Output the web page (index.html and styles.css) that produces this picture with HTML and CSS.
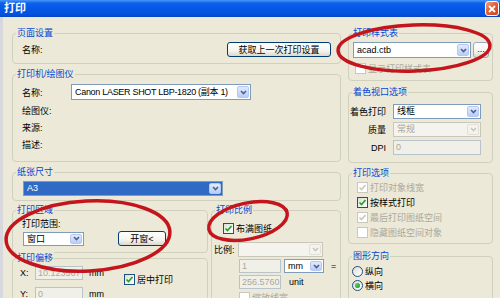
FILE: index.html
```html
<!DOCTYPE html>
<html lang="zh-CN">
<head>
<meta charset="utf-8">
<title>打印</title>
<link rel="stylesheet" href="styles.css">
</head>
<body>
<div class="window">
  <div class="titlebar">
    <span class="title">打印</span>
    <span class="close"><svg width="8" height="8" viewBox="0 0 8 8"><path d="M1 1L7 7M7 1L1 7" stroke="#fff" stroke-width="1.8"/></svg></span>
  </div>
  <div class="content">
    <div class="left">
      <div class="group g-page">
        <span class="legend">页面设置</span>
        <div class="page-row">
          <span>名称:</span>
          <span class="btn btn-last">获取上一次打印设置</span>
        </div>
      </div>
      <div class="group g-printer">
        <span class="legend">打印机/绘图仪</span>
        <div class="printer-row">
          <span class="plabel">名称:</span>
          <span class="combo combo-printer"><span class="val">Canon LASER SHOT LBP-1820 (副本 1)</span><span class="arrow"><svg width="7" height="5" viewBox="0 0 7 5"><path d="M1 1L3.5 3.5L6 1" fill="none" stroke="#4D6185" stroke-width="1.6"/></svg></span></span>
        </div>
        <div class="info-row first">绘图仪:</div>
        <div class="info-row">来源:</div>
        <div class="info-row">描述:</div>
      </div>
      <div class="group g-paper">
        <span class="legend">纸张尺寸</span>
        <span class="combo combo-paper selected"><span class="val">A3</span><span class="arrow"><svg width="7" height="5" viewBox="0 0 7 5"><path d="M1 1L3.5 3.5L6 1" fill="none" stroke="#4D6185" stroke-width="1.6"/></svg></span></span>
      </div>
      <div class="split">
        <div class="subcol">
          <div class="group g-area">
            <span class="legend">打印区域</span>
            <div class="area-label">打印范围:</div>
            <div class="area-row">
              <span class="combo combo-window"><span class="val">窗口</span><span class="arrow"><svg width="7" height="5" viewBox="0 0 7 5"><path d="M1 1L3.5 3.5L6 1" fill="none" stroke="#4D6185" stroke-width="1.6"/></svg></span></span>
              <span class="btn btn-window">开窗&lt;</span>
            </div>
          </div>
          <div class="group g-offset">
            <span class="legend">打印偏移</span>
            <div class="offset-body">
              <div class="offset-fields">
                <div class="offset-row"><span class="olabel">X:</span><span class="field disabled">10.123567</span><span class="unit-mm">mm</span></div>
                <div class="offset-row"><span class="olabel">Y:</span><span class="field disabled">0</span><span class="unit-mm">mm</span></div>
              </div>
              <div class="check-item center-check"><span class="cb"><svg width="9" height="9" viewBox="0 0 9 9"><path d="M1.5 4.5L3.5 6.5L7.5 2" fill="none" stroke="#21A121" stroke-width="1.6"/></svg></span>居中打印</div>
            </div>
          </div>
        </div>
        <div class="group g-scale">
          <span class="legend">打印比例</span>
          <div class="check-item scale-check"><span class="cb"><svg width="9" height="9" viewBox="0 0 9 9"><path d="M1.5 4.5L3.5 6.5L7.5 2" fill="none" stroke="#21A121" stroke-width="1.6"/></svg></span>布满图纸</div>
          <div class="scale-row1">
            <span class="slabel">比例:</span>
            <span class="combo disabled combo-scale"><span class="val"></span><span class="arrow"><svg width="7" height="5" viewBox="0 0 7 5"><path d="M1 1L3.5 3.5L6 1" fill="none" stroke="#C9C7BA" stroke-width="1.6"/></svg></span></span>
          </div>
          <div class="scale-row">
            <span class="field disabled small">1</span>
            <span class="combo combo-mm"><span class="val">mm</span><span class="arrow"><svg width="7" height="5" viewBox="0 0 7 5"><path d="M1 1L3.5 3.5L6 1" fill="none" stroke="#4D6185" stroke-width="1.6"/></svg></span></span>
            <span class="eq">=</span>
          </div>
          <div class="scale-row">
            <span class="field disabled small">256.5760</span>
            <span class="unit-word">unit</span>
          </div>
          <div class="check-item scale-last dis"><span class="cb dis"></span>缩放线宽</div>
        </div>
      </div>
    </div>
    <div class="right">
      <div class="group g-style">
        <span class="legend">打印样式表</span>
        <div class="style-row">
          <span class="combo combo-style"><span class="val">acad.ctb</span><span class="arrow"><svg width="7" height="5" viewBox="0 0 7 5"><path d="M1 1L3.5 3.5L6 1" fill="none" stroke="#4D6185" stroke-width="1.6"/></svg></span></span>
          <span class="btn dots">...</span>
        </div>
        <div class="check-item style-check dis"><span class="cb dis"></span>显示打印样式表</div>
      </div>
      <div class="group g-shade">
        <span class="legend">着色视口选项</span>
        <div class="shade-grid">
          <span class="glabel">着色打印</span>
          <span class="combo"><span class="val">线框</span><span class="arrow"><svg width="7" height="5" viewBox="0 0 7 5"><path d="M1 1L3.5 3.5L6 1" fill="none" stroke="#4D6185" stroke-width="1.6"/></svg></span></span>
          <span class="glabel">质量</span>
          <span class="combo disabled"><span class="val">常规</span><span class="arrow"><svg width="7" height="5" viewBox="0 0 7 5"><path d="M1 1L3.5 3.5L6 1" fill="none" stroke="#C9C7BA" stroke-width="1.6"/></svg></span></span>
          <span class="glabel">DPI</span>
          <span class="field disabled">0</span>
        </div>
      </div>
      <div class="group g-options">
        <span class="legend">打印选项</span>
        <div class="opt-list">
          <div class="check-item dis"><span class="cb dis"><svg width="9" height="9" viewBox="0 0 9 9"><path d="M1.5 4.5L3.5 6.5L7.5 2" fill="none" stroke="#C9C7BA" stroke-width="1.6"/></svg></span>打印对象线宽</div>
          <div class="check-item"><span class="cb"><svg width="9" height="9" viewBox="0 0 9 9"><path d="M1.5 4.5L3.5 6.5L7.5 2" fill="none" stroke="#21A121" stroke-width="1.6"/></svg></span>按样式打印</div>
          <div class="check-item dis"><span class="cb dis"><svg width="9" height="9" viewBox="0 0 9 9"><path d="M1.5 4.5L3.5 6.5L7.5 2" fill="none" stroke="#C9C7BA" stroke-width="1.6"/></svg></span>最后打印图纸空间</div>
          <div class="check-item dis"><span class="cb dis"></span>隐藏图纸空间对象</div>
        </div>
      </div>
      <div class="group g-orient">
        <span class="legend">图形方向</span>
        <div class="radio-list">
          <div class="radio-item"><span class="radio"></span>纵向</div>
          <div class="radio-item"><span class="radio on"><span class="dot"></span></span>横向</div>
        </div>
      </div>
    </div>
  </div>
  <svg class="marks" width="500" height="298" viewBox="0 0 500 298">
    <ellipse cx="414" cy="48" rx="76" ry="23" transform="rotate(-2 414 48)"/>
    <ellipse cx="88" cy="236" rx="82" ry="35" transform="rotate(-3 88 236)"/>
    <ellipse cx="248" cy="221" rx="40" ry="18" transform="rotate(-12 248 221)"/>
  </svg>
</div>
</body>
</html>
```

FILE: styles.css
```css
* { box-sizing: border-box; }
html, body { margin: 0; padding: 0; }
body {
  width: 500px;
  height: 298px;
  overflow: hidden;
  background: #ECE9D8;
  font-family: "Liberation Sans", "Noto Sans CJK SC", sans-serif;
  font-size: 9px;
  color: #000;
}
.window {
  position: relative;
  width: 500px;
  height: 298px;
  overflow: hidden;
  background: #ECE9D8;
}
.titlebar {
  height: 17px;
  display: flex;
  align-items: center;
  justify-content: space-between;
  padding: 0 1px 0 4px;
  background: linear-gradient(#4A97F8 0%, #0C62EC 18%, #0457E6 50%, #0352DC 85%, #0A45C2 100%);
}
.title {
  color: #fff;
  font-weight: bold;
  font-size: 11px;
  line-height: 17px;
}
.close {
  width: 14px;
  height: 15px;
  border: 1px solid #fff;
  border-radius: 3px;
  background: linear-gradient(135deg, #F0A488 0%, #E06236 45%, #C8421C 100%);
  display: flex;
  align-items: center;
  justify-content: center;
}
.content {
  display: flex;
  gap: 7px;
  height: 281px;
  border-left: 3px solid #D6D8DE;
  padding-left: 9px;
}
.left {
  width: 329px;
  padding-top: 16px;
  display: flex;
  flex-direction: column;
}
.right {
  width: 145px;
  padding-top: 16px;
  display: flex;
  flex-direction: column;
}
.group {
  position: relative;
  border: 1px solid #D0D0BF;
  border-radius: 4px;
  flex: none;
}
.legend {
  position: absolute;
  top: -7px;
  left: 3px;
  padding: 0 1px;
  background: #ECE9D8;
  color: #0046D5;
  line-height: 12px;
  white-space: nowrap;
}

/* left column groups */
.g-page { height: 31px; }
.g-printer { height: 88px; margin-top: 10px; }
.g-paper { height: 29px; margin-top: 10px; }
.split { display: flex; gap: 3px; margin-top: 9px; }
.subcol { width: 196px; display: flex; flex-direction: column; }
.g-area { height: 43px; }
.g-offset { height: 60px; margin-top: 5px; }
.g-scale { width: 130px; height: 100px; }

/* right column groups */
.g-style { height: 48px; }
.g-shade { height: 71px; margin-top: 11px; }
.g-options { height: 71px; margin-top: 10px; }
.g-orient { height: 60px; margin-top: 12px; }

/* controls */
.btn {
  display: flex;
  align-items: center;
  justify-content: center;
  height: 15px;
  border: 1px solid #003C74;
  border-radius: 3px;
  background: linear-gradient(#FFFFFF 0%, #F5F4EF 60%, #DCD7CB 100%);
  white-space: nowrap;
}
.combo {
  display: flex;
  align-items: stretch;
  border: 1px solid #7F9DB9;
  background: #fff;
  padding: 1px;
  height: 15px;
}
.combo .val {
  flex: 1;
  padding-left: 2px;
  white-space: nowrap;
  overflow: hidden;
  line-height: 11px;
}
.arrow {
  flex: none;
  width: 12px;
  display: flex;
  align-items: center;
  justify-content: center;
  background: linear-gradient(#E2EAFE, #B9CDF9);
  border: 1px solid #B5C8F5;
  border-radius: 2px;
}
.combo.disabled {
  border-color: #C9C7BA;
  background: #F4F3EE;
  color: #ACA899;
}
.combo.disabled .arrow {
  background: #F4F3EE;
  border-color: #E2E0D6;
}
.combo.selected {
  background: #316AC5;
}
.combo.selected .val {
  color: #fff;
}
.field {
  display: block;
  height: 14px;
  border: 1px solid #7F9DB9;
  background: #fff;
  padding-left: 2px;
  line-height: 12px;
  white-space: nowrap;
  overflow: hidden;
}
.field.disabled {
  border-color: #B9C3CC;
  background: #F1F0E8;
  color: #ACA899;
}
.check-item {
  display: flex;
  align-items: center;
  gap: 2px;
  height: 15px;
  white-space: nowrap;
}
.check-item.dis { color: #ACA899; }
.cb {
  flex: none;
  width: 11px;
  height: 11px;
  border: 1px solid #1C5180;
  background: linear-gradient(135deg, #DEDED8, #FFFFFF);
  display: flex;
  align-items: center;
  justify-content: center;
}
.cb.dis {
  border-color: #CAC8BB;
  background: #fff;
}

/* page setup */
.page-row {
  display: flex;
  align-items: center;
  justify-content: space-between;
  height: 15px;
  margin: 8px 9px 0 9px;
}
.btn-last { width: 104px; }

/* printer */
.printer-row {
  display: flex;
  align-items: center;
  height: 16px;
  margin: 9px 0 0 9px;
}
.plabel { width: 49px; }
.combo-printer { width: 180px; height: 16px; }
.combo-printer .val { line-height: 12px; letter-spacing: -0.3px; }
.info-row {
  height: 17px;
  line-height: 17px;
  padding-left: 9px;
}
.info-row.first { margin-top: 3px; }

/* paper */
.combo-paper { width: 200px; margin: 8px 0 0 10px; }

/* area */
.area-label {
  margin: 7px 0 0 9px;
  height: 12px;
  line-height: 12px;
}
.area-row {
  display: flex;
  align-items: center;
  height: 15px;
  margin: 1px 0 0 10px;
}
.combo-window { width: 61px; height: 14px; }
.combo-window .val { line-height: 10px; }
.btn-window { width: 48px; margin-left: 34px; }

/* offset */
.offset-body {
  display: flex;
  padding: 7px 0 0 7px;
}
.offset-fields {
  width: 104px;
  display: flex;
  flex-direction: column;
  gap: 7px;
}
.offset-row {
  display: flex;
  align-items: center;
  height: 14px;
}
.olabel { width: 15px; }
.offset-row .field { width: 48px; }
.unit-mm { margin-left: 6px; }
.center-check { margin-top: 6px; }

/* scale */
.scale-check { margin: 10px 0 0 11px; }
.scale-row1 {
  display: flex;
  align-items: center;
  height: 15px;
  margin-top: 6px;
  padding-left: 2px;
}
.slabel { width: 24px; }
.combo-scale { width: 85px; }
.scale-row {
  display: flex;
  align-items: center;
  height: 14px;
  margin-top: 2px;
  padding-left: 27px;
}
.field.small { width: 42px; }
.combo-mm { width: 40px; height: 14px; margin-left: 3px; }
.combo-mm .val { line-height: 10px; }
.eq { margin-left: 7px; }
.unit-word { margin-left: 8px; }
.scale-last { margin-top: 1px; padding-left: 27px; }

/* style table */
.style-row {
  display: flex;
  gap: 2px;
  height: 16px;
  margin: 8px 0 0 4px;
}
.combo-style { width: 118px; height: 16px; }
.combo-style .val { line-height: 12px; }
.dots {
  width: 16px;
  height: 16px;
  border-color: #9DABC0;
  align-items: flex-end;
  padding-bottom: 3px;
}
.style-check { margin: 3px 0 0 6px; }

/* shade */
.shade-grid {
  display: grid;
  grid-template-columns: 37px 88px;
  grid-auto-rows: 15px;
  column-gap: 7px;
  row-gap: 3px;
  padding-top: 11px;
}
.glabel {
  justify-self: end;
  align-self: center;
  white-space: nowrap;
}
.shade-grid .field { height: 15px; }

/* options */
.opt-list { padding: 6px 0 0 8px; }

/* orientation */
.radio-list { padding: 7px 0 0 3px; }
.radio-item {
  display: flex;
  align-items: center;
  gap: 2px;
  height: 14px;
}
.radio {
  width: 11px;
  height: 11px;
  border: 1px solid #1C5180;
  border-radius: 50%;
  background: linear-gradient(135deg, #DEDED8, #FFFFFF);
  display: flex;
  align-items: center;
  justify-content: center;
}
.dot {
  width: 5px;
  height: 5px;
  border-radius: 50%;
  background: radial-gradient(circle at 35% 35%, #5BD15B, #1B8A1B);
}

/* red annotation ellipses drawn over the dialog */
.marks {
  position: absolute;
  left: 0;
  top: 0;
  pointer-events: none;
}
.marks ellipse {
  fill: none;
  stroke: #C4141C;
  stroke-width: 3.5;
}
```
